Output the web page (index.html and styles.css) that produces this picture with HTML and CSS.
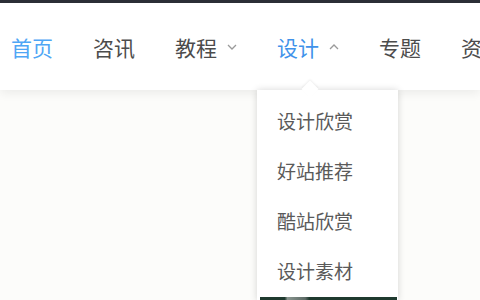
FILE: index.html
```html
<!DOCTYPE html>
<html lang="zh-CN">
<head>
<meta charset="utf-8">
<link rel="stylesheet" href="styles.css">
</head>
<body>
<div class="topbar"></div>
<header class="header">
  <nav class="nav">
    <a class="nav-item active-home">首页</a>
    <a class="nav-item">咨讯</a>
    <a class="nav-item">教程<svg class="chev" width="10" height="6" viewBox="0 0 10 6"><path d="M1 1 L5 5 L9 1" fill="none" stroke="#9a9a9a" stroke-width="1.3"/></svg></a>
    <div class="nav-item open">设计<svg class="chev" width="10" height="6" viewBox="0 0 10 6"><path d="M1 5 L5 1 L9 5" fill="none" stroke="#9a9a9a" stroke-width="1.3"/></svg>
      <div class="dropdown">
        <span class="caret"></span>
        <a class="dd-item">设计欣赏</a>
        <a class="dd-item">好站推荐</a>
        <a class="dd-item">酷站欣赏</a>
        <a class="dd-item">设计素材</a>
        <div class="dd-strip"></div>
      </div>
    </div>
    <a class="nav-item">专题</a>
    <a class="nav-item">资源</a>
  </nav>
</header>
<main class="content"></main>
</body>
</html>
```
FILE: styles.css
```css
html, body {
  margin: 0;
  padding: 0;
  width: 480px;
  height: 300px;
  overflow: hidden;
  background: #fcfcfa;
  font-family: "Noto Sans CJK SC", "Noto Sans", sans-serif;
}
.topbar {
  height: 3px;
  background: #2c3037;
}
.header {
  height: 87px;
  background: #fff;
  box-shadow: 0 3px 10px rgba(0, 0, 0, 0.07);
  position: relative;
  z-index: 2;
}
.nav {
  display: flex;
  height: 100%;
  margin-left: -10px;
  white-space: nowrap;
}
.nav-item {
  position: relative;
  display: flex;
  align-items: center;
  padding: 0 20px;
  font-size: 21px;
  color: #4c4c4c;
  text-decoration: none;
  flex-shrink: 0;
}
.nav-item:first-child { margin-left: 1px; }
.active-home { color: #4fa6f5; }
.open { color: #4092ea; }
.chev { margin-left: 10px; }
.dropdown {
  position: absolute;
  top: 87px;
  left: 0;
  width: 141px;
  background: #fff;
  box-shadow: 0 0 7px rgba(0, 0, 0, 0.16);
  padding-top: 6px;
  display: flex;
  flex-direction: column;
  z-index: 3;
}
.caret {
  position: absolute;
  top: -7px;
  left: 47px;
  width: 12px;
  height: 12px;
  background: #fff;
  transform: rotate(45deg);
  box-shadow: -1px -1px 2px rgba(0, 0, 0, 0.06);
}
.dd-item {
  position: relative;
  height: 50px;
  line-height: 50px;
  padding-left: 20px;
  font-size: 19px;
  color: #5a5a5a;
}
.dd-strip {
  height: 4px;
  margin: 1px 1px 0 3px;
  background: linear-gradient(90deg, #1f3a2f 0, #1f3a2f 18%, #8a9690 20%, #5d6b66 33%, #1f3a2f 36%, #1f3a2f 100%);
}
.content {
  height: 210px;
}
```
